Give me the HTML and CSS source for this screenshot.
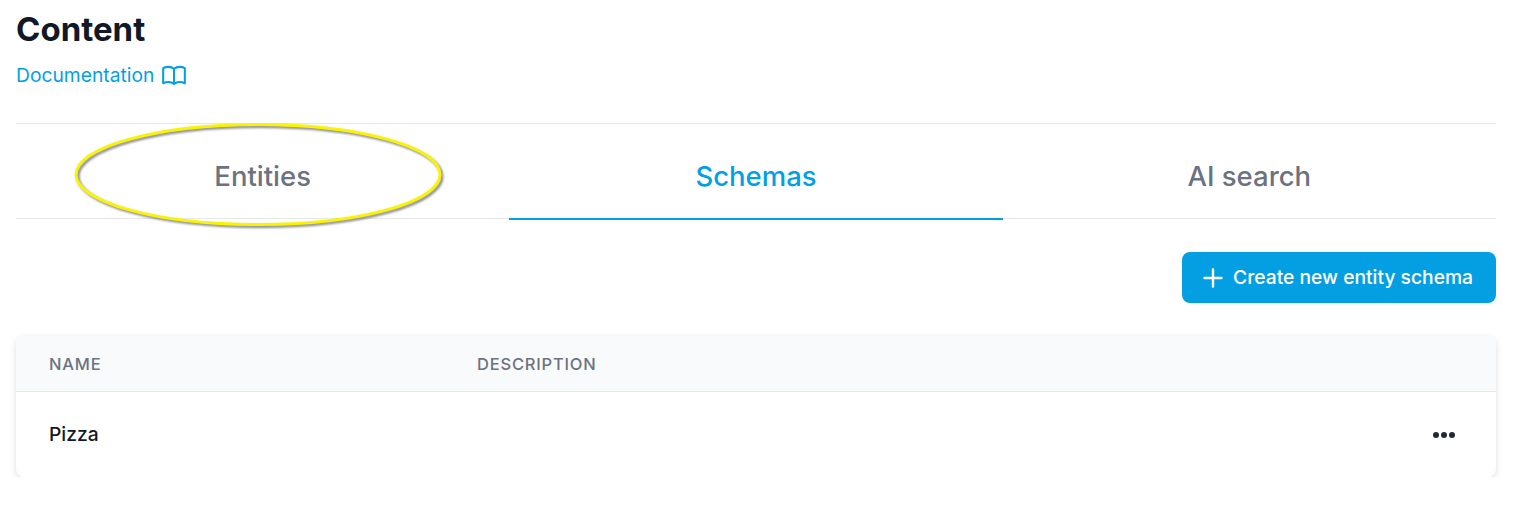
FILE: index.html
```html
<!DOCTYPE html>
<html lang="en">
<head>
  <meta charset="UTF-8">
  <title>Content</title>
  <link rel="stylesheet" href="styles.css">
</head>
<body>
  <div class="page">
    <h1>Content</h1>
    <a class="doc-link" href="#">Documentation
      <svg class="book-icon" viewBox="0 0 24 24" fill="none" stroke="currentColor" stroke-width="1.900" stroke-linecap="round" stroke-linejoin="round">
        <path d="M12 6.200C10.700 5.200 8.900 4.500 7 4.500c-1.800 0-3.500.4-5 1.200v14c1.500-.8 3.200-1.200 5-1.200 1.900 0 3.700.7 5 1.700 1.300-1 3.100-1.700 5-1.700 1.800 0 3.500.4 5 1.200v-14c-1.500-.8-3.200-1.200-5-1.200-1.900 0-3.700.7-5 1.700zM12 6.200V20"/>
      </svg>
    </a>

    <div class="tabs">
      <div class="tab">Entities</div>
      <div class="tab tab-active">Schemas</div>
      <div class="tab">AI search</div>
      <svg class="highlight" width="380" height="116" viewBox="0 0 380 116">
        <ellipse class="highlight-shadow" cx="191" cy="60.500" rx="182" ry="50"/>
        <ellipse class="highlight-line" cx="189" cy="58.500" rx="182" ry="50"/>
      </svg>
    </div>

    <div class="actions">
      <button class="btn-primary" type="button">
        <svg class="plus-icon" viewBox="0 0 20 20" fill="none" stroke="currentColor" stroke-width="2.400" stroke-linecap="round">
          <path d="M10 1.500v17M1.500 10h17"/>
        </svg>
        <span class="btn-label">Create new entity schema</span>
      </button>
    </div>

    <div class="table-card">
      <div class="row row-head">
        <div class="col-name">Name</div>
        <div class="col-desc">Description</div>
      </div>
      <div class="row row-body">
        <div class="col-name">Pizza</div>
        <div class="col-desc"></div>
        <svg class="dots-icon" viewBox="0 0 24 8" fill="currentColor">
          <circle cx="4" cy="4" r="3"/>
          <circle cx="12" cy="4" r="3"/>
          <circle cx="20" cy="4" r="3"/>
        </svg>
      </div>
    </div>
  </div>
</body>
</html>
```

FILE: styles.css
```css
* {
  box-sizing: border-box;
}
body {
  margin: 0;
  font-family: Inter, "Liberation Sans", sans-serif;
  background: #fff;
  color: #111827;
}
.page {
  padding: 0 27px 0 16px;
}
h1 {
  margin: 0;
  padding-top: 11px;
  font-size: 33px;
  line-height: 36px;
  font-weight: 700;
}
.doc-link {
  display: flex;
  align-items: center;
  gap: 7px;
  margin-top: 14px;
  color: #049fe3;
  font-size: 19.25px;
  line-height: 28px;
  text-decoration: none;
}
.book-icon {
  width: 26px;
  height: 26px;
}
.tabs {
  position: relative;
  display: flex;
  margin-top: 34px;
  border-top: 1px solid #e5e7eb;
  border-bottom: 1px solid #e5e7eb;
}
.tab {
  flex: 1;
  height: 96px;
  margin-bottom: -2px;
  display: flex;
  align-items: center;
  justify-content: center;
  padding-top: 9px;
  font-size: 27.5px;
  font-weight: 500;
  color: #6b7280;
  border-bottom: 2px solid transparent;
}
.tab-active {
  color: #049fe3;
  border-bottom-color: #049fe3;
}
.highlight {
  position: absolute;
  left: 53px;
  top: -8px;
}
.highlight-line,
.highlight-shadow {
  fill: none;
  stroke-width: 3;
}
.highlight-line {
  stroke: #fbf400;
}
.highlight-shadow {
  stroke: #888;
  filter: blur(1px);
}
.actions {
  display: flex;
  justify-content: flex-end;
  margin-top: 33px;
}
.btn-primary {
  display: flex;
  align-items: center;
  gap: 10px;
  height: 51px;
  padding: 0 23px 0 21px;
  border: none;
  border-radius: 8px;
  background: #049fe3;
  color: #fff;
  font-family: inherit;
  font-size: 19.25px;
  font-weight: 500;
}
.btn-label {
  padding-bottom: 2px;
}
.plus-icon {
  width: 20px;
  height: 20px;
}
.table-card {
  margin-top: 33px;
  border-radius: 8px;
  background: #fff;
  box-shadow: 0 2px 6px rgba(0, 0, 0, 0.13);
  overflow: hidden;
}
.row {
  display: flex;
  align-items: center;
  padding: 0 40px 0 33px;
}
.row-head {
  height: 56px;
  background: #f9fafb;
  border-bottom: 1px solid #e5e7eb;
  color: #6b7280;
  font-size: 16.5px;
  font-weight: 500;
  letter-spacing: 0.8px;
  text-transform: uppercase;
}
.row-body {
  height: 85px;
  font-size: 19.25px;
  font-weight: 500;
  color: #111827;
}
.row-body .col-name {
  padding-bottom: 2px;
}
.col-name {
  width: 428px;
}
.col-desc {
  flex: 1;
}
.dots-icon {
  width: 24px;
  height: 8px;
  color: #1f2937;
}
```
